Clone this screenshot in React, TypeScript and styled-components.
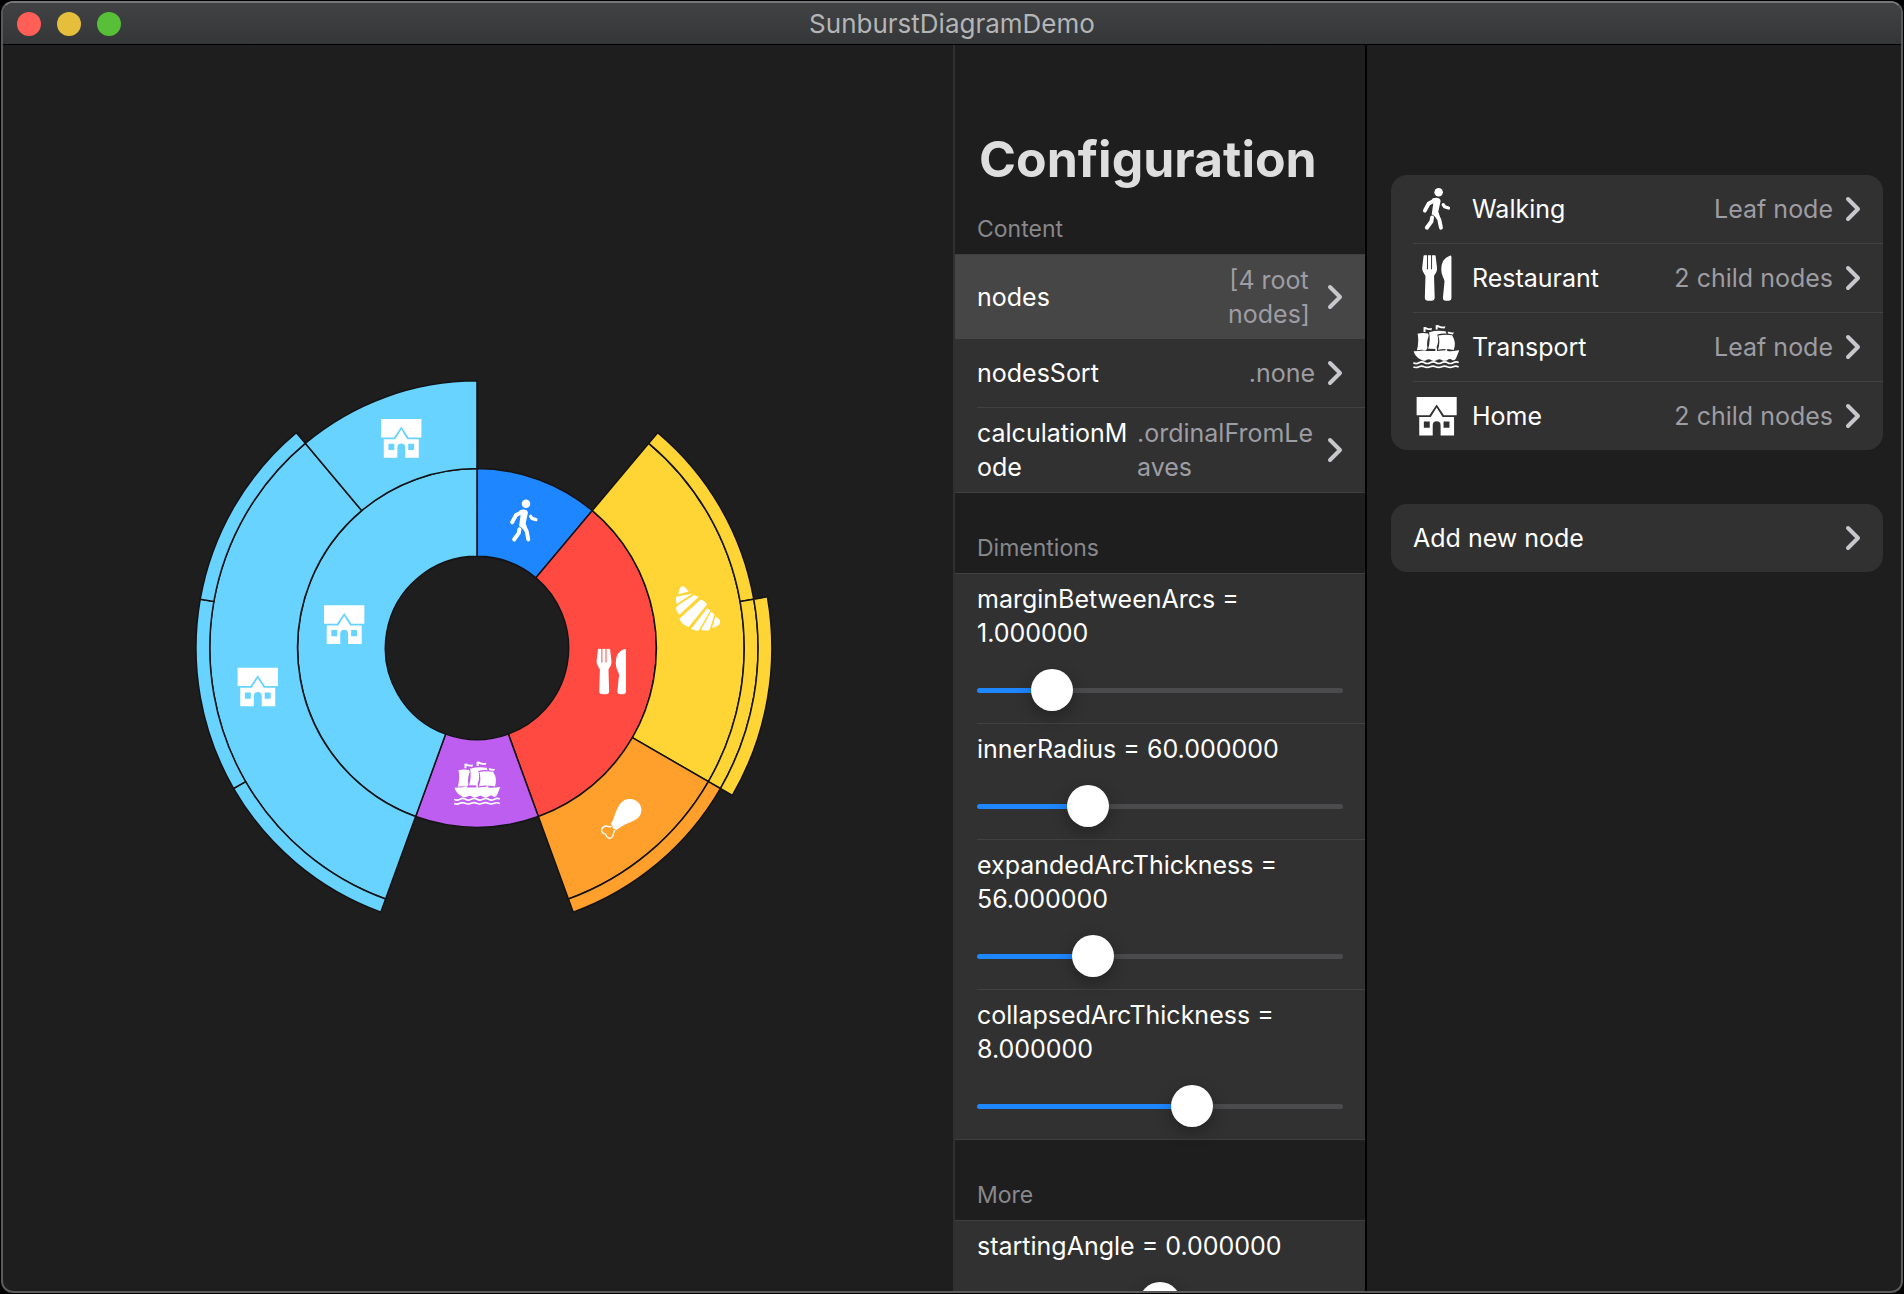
import React, { useState } from "react";
import styled, { createGlobalStyle } from "styled-components";

const GlobalStyle = createGlobalStyle`
  *, *::before, *::after { box-sizing: border-box; }
  body {
    margin: 0;
    background: #000;
    color: #fff;
    font-family: Inter, "Liberation Sans", sans-serif;
    font-size: 25px;
    line-height: 34px;
  }
  h1, h2, p { margin: 0; }
`;

const Desktop = styled.div`
  height: 100vh;
  padding: 1px;
`;

const Window = styled.div`
  display: flex;
  flex-direction: column;
  height: 100%;
  overflow: hidden;
  border: 2px solid #5a5a5c;
  border-top-color: #77777a;
  border-radius: 12px;
  background: #1e1e1e;
`;

const TitleBar = styled.header`
  display: grid;
  grid-template-columns: 1fr auto 1fr;
  align-items: center;
  flex: none;
  height: 42px;
  padding: 0 14px;
  border-bottom: 1px solid #000;
  background: linear-gradient(#414244, #343638);
`;

const TrafficLights = styled.div`
  display: flex;
  gap: 16px;
`;

const Light = styled.button<{ $color: string }>`
  width: 24px;
  height: 24px;
  padding: 0;
  border: 0;
  border-radius: 50%;
  background: ${(p) => p.$color};
`;

const WindowTitle = styled.p`
  color: #b4b5b6;
  font-size: 26px;
`;

const Panes = styled.div`
  display: grid;
  grid-template-columns: minmax(0, 1fr) 414px 534px;
  flex: 1;
  min-height: 0;
`;

const DiagramPane = styled.main`
  display: flex;
  align-items: center;
  justify-content: center;
  padding: 0 2px 41px 0;
`;

const ConfigPane = styled.section`
  overflow: hidden;
  padding-top: 80px;
  border-left: 2px solid #303032;
  border-right: 2px solid #000;
`;

const PaneTitle = styled.h1`
  padding: 0 24px;
  color: #dedede;
  font-size: 50px;
  font-weight: 700;
  line-height: 68px;
`;

const GroupTitle = styled.h2<{ $first?: boolean }>`
  padding: ${(p) => (p.$first ? "19px" : "38px")} 22px 8px;
  color: #88888c;
  font-size: 23px;
  font-weight: 400;
  line-height: 34px;
`;

const Group = styled.div`
  border-top: 1px solid #3f3f41;
  border-bottom: 1px solid #3f3f41;
  background: #313131;
`;

const Chevron = styled.svg`
  flex: none;
  width: 16px;
  height: 26px;
  fill: none;
  stroke: #c8c8cc;
  stroke-width: 4;
  stroke-linecap: round;
  stroke-linejoin: round;
`;

const LinkRow = styled.button<{ $selected?: boolean }>`
  display: flex;
  align-items: center;
  width: 100%;
  min-height: 68px;
  padding: 8px 22px;
  border: 0;
  background: ${(p) => (p.$selected ? "#464646" : "transparent")};
  color: inherit;
  font: inherit;
  text-align: left;
`;

const LinkText = styled.span`
  flex: 1;
  min-width: 0;
  word-break: break-all;
`;

const LinkValue = styled.span<{ $width?: number; $align?: string }>`
  flex: none;
  width: ${(p) => (p.$width ? `${p.$width}px` : "auto")};
  margin: 0 12px 0 8px;
  color: #9d9da3;
  text-align: ${(p) => p.$align ?? "right"};
  word-break: ${(p) => (p.$align === "left" ? "break-all" : "normal")};
`;

const Divider = styled.hr`
  height: 1px;
  margin: 0 0 0 22px;
  border: 0;
  background: #424244;
`;

const SliderRow = styled.div`
  display: flex;
  flex-direction: column;
  gap: 19px;
  padding: 8px 22px 12px;
`;

const SliderLabel = styled.label`
  display: block;
`;

const Slider = styled.input`
  appearance: none;
  display: block;
  width: 100%;
  height: 42px;
  margin: 0;
  background: transparent;

  &::-webkit-slider-runnable-track {
    height: 5px;
    border-radius: 3px;
    background: linear-gradient(
      to right,
      #1e86ff var(--fill),
      #4b4b4d var(--fill)
    );
  }

  &::-webkit-slider-thumb {
    appearance: none;
    width: 42px;
    height: 42px;
    margin-top: -19px;
    border-radius: 50%;
    background: #fff;
    box-shadow: 0 5px 16px rgba(0, 0, 0, 0.3);
  }
`;

const NodesPane = styled.aside`
  display: flex;
  flex-direction: column;
  gap: 54px;
  padding: 130px 18px 0 24px;
`;

const Card = styled.div`
  overflow: hidden;
  border-radius: 16px;
  background: #313131;
`;

const IconBox = styled.svg`
  flex: none;
  width: 46px;
  height: 46px;
  margin-right: 13px;
`;

const Diagram = styled.svg`
  width: 616px;
  height: 616px;
`;

type IconName = "walking" | "restaurant" | "ship" | "house" | "croissant" | "drumstick";

/* Glyphs are white and share a 140-unit box. */
const glyphs: Record<IconName, React.ReactNode> = {
  walking: (
    <g fill="none" stroke="#fff" strokeLinecap="round" strokeLinejoin="round" strokeWidth="12">
      <circle cx="78" cy="19" r="13" fill="#fff" stroke="none" />
      <path d="M68 43 L48 53 L36 75" />
      <path d="M92 57 L96 63 L108 67" strokeWidth="10" />
      <path d="M58 96 L56 108 L42 127" />
      <path d="M68 84 L80 102 L85 127" />
      <path
        d="M58 39 C70 33 84 36 84 46 L77 78 L83 96 L72 96 L57 86 L62 50 Z"
        fill="#fff"
        stroke="none"
      />
    </g>
  ),
  restaurant: (
    <g fill="#fff">
      <path d="M34 1h8.500v42h3V1h9.500v42h3V1H67q1.500 0 2 3l4 34q1 8-2 14-5 9-7 12l2 65q0 10-10 10H46q-10 0-10-10l2-65q-2-3-7-12-4-6-3-14l4-34q.5-3 2-3z" />
      <path d="M112 2q5-1 5 4v124q0 9-9 9h-8q-9 0-9-9l5-50q-1-6-5-13-5-12-5-23 0-33 26-42z" />
    </g>
  ),
  ship: (
    <g fill="#fff">
      <path d="M14 30 Q28 26 46 29 L48 35 Q40 58 44 72 L40 80 Q26 77 12 80 Q19 52 14 30Z" />
      <path d="M49 25 Q74 18 99 22 L102 29 Q86 28 74 32 Q80 52 72 70 L72 76 L46 75 Q54 50 49 25Z" />
      <path d="M77 35 Q98 31 119 34 Q133 57 124 79 Q100 74 76 78 Q84 55 77 35Z" />
      <path d="M32 24V10q6-2 12 2 6 2 14 0l-2 7q-10 0-18-3v8zM69 17V4q7-2 13 2 8 3 17 1l-3 7q-11 0-21-4v7zM106 23q10 4 19 3l-4 6-15-3z" />
      <path d="M2 83q15 0 34-3l5 2h27V74h5v8l26-2v-4l5 1v5q18 2 37-2l-10 24q-3 8-11 6-8-7-16 0-8 4-16 0-8-6-16 0-8 5-16 0-8-6-16 0-8 4-15-1Q6 100 2 83z" />
      <g fill="none" stroke="#fff" strokeWidth="5">
        <path d="M1 118q9 5 17 0t16-1q9 6 18 1t17-1q9 6 18 1t17-1q9 6 18 1 9-5 17-1" />
        <path d="M1 131q9 3 17-1t16 0q9 4 18 0t17 0q9 4 18 0t17 0q9 4 18 0 9-4 17 1" />
      </g>
    </g>
  ),
  house: (
    <g fill="#fff" fillRule="evenodd">
      <path d="M11 12H133V68H94L72 35L50 68H11Z" />
      <path d="M19 73H54L72 44L90 73H125V129H84V98a12 12 0 0 0-24 0V129H19ZM33 87V106H51V87ZM93 87V106H111V87Z" />
    </g>
  ),
  croissant: (
    <path
      fill="#fff"
      d="M14 25Q16 1 27 0Q34 2 45 16ZM7 32L57 22L9 54Q4 42 7 32ZM6 68Q8 62 14 57L62 27L75 33L17 87Q9 79 6 68ZM17 99L80 42Q86 38 101 55L45 124Q24 117 17 99ZM53 129L101 67L111 73L75 135Q61 135 53 129ZM82 133L113 77L123 87L108 134Q94 135 82 133ZM126 92Q142 101 141 110Q138 121 116 127Z"
    />
  ),
  drumstick: (
    <g>
      <path
        fill="#fff"
        d="M40 84C50 76 53 46 67 27C79 8 101 6 116 14C133 23 138 44 129 59C117 78 82 82 61 101L54 105L52 99L46 98L46 91Z"
      />
      <path
        fill="none"
        stroke="#fff"
        strokeWidth="4"
        d="M43 91C36 97 33 91 27 91C13 92 9 105 16 112C20 116 25 112 26 118C28 129 38 131 45 124C51 117 45 112 53 104"
      />
    </g>
  ),
};

interface ArcNode {
  color: string;
  icon?: IconName;
  ring: number;
  from: number;
  to: number;
}

const blue = "#1e86ff";
const red = "#ff4a42";
const yellow = "#ffd535";
const orange = "#ff9f2c";
const purple = "#bd5ef0";
const cyan = "#69d3ff";

const arcs: ArcNode[] = [
  { color: blue, icon: "walking", ring: 0, from: 0, to: 40 },
  { color: red, icon: "restaurant", ring: 0, from: 40, to: 160 },
  { color: purple, icon: "ship", ring: 0, from: 160, to: 200 },
  { color: cyan, icon: "house", ring: 0, from: 200, to: 360 },
  { color: yellow, icon: "croissant", ring: 1, from: 40, to: 120 },
  { color: orange, icon: "drumstick", ring: 1, from: 120, to: 160 },
  { color: cyan, icon: "house", ring: 1, from: 200, to: 320 },
  { color: cyan, icon: "house", ring: 1, from: 320, to: 360 },
  { color: yellow, ring: 2, from: 40, to: 80 },
  { color: yellow, ring: 2, from: 80, to: 120 },
  { color: orange, ring: 2, from: 120, to: 160 },
  { color: cyan, ring: 2, from: 200, to: 240 },
  { color: cyan, ring: 2, from: 240, to: 280 },
  { color: cyan, ring: 2, from: 280, to: 320 },
  { color: yellow, ring: 3, from: 80, to: 120 },
];

const polar = (radius: number, degrees: number) => {
  const a = (degrees * Math.PI) / 180;
  return [radius * Math.sin(a), -radius * Math.cos(a)];
};

const wedge = (inner: number, outer: number, from: number, to: number) => {
  const large = to - from > 180 ? 1 : 0;
  const [ax, ay] = polar(inner, from);
  const [bx, by] = polar(outer, from);
  const [cx, cy] = polar(outer, to);
  const [dx, dy] = polar(inner, to);
  return `M${ax} ${ay}L${bx} ${by}A${outer} ${outer} 0 ${large} 1 ${cx} ${cy}L${dx} ${dy}A${inner} ${inner} 0 ${large} 0 ${ax} ${ay}Z`;
};

interface Settings {
  marginBetweenArcs: number;
  innerRadius: number;
  expandedArcThickness: number;
  collapsedArcThickness: number;
  startingAngle: number;
}

function Sunburst({ settings }: { settings: Settings }) {
  const { marginBetweenArcs: gap, innerRadius, startingAngle } = settings;
  const thickness = (ring: number) =>
    ring < 2 ? settings.expandedArcThickness : settings.collapsedArcThickness;
  const innerEdge = (ring: number) => {
    let r = innerRadius - gap / 2;
    for (let i = 0; i < ring; i++) r += thickness(i) + gap;
    return r;
  };
  return (
    <Diagram viewBox="-200 -200 400 400" role="img" aria-label="Sunburst diagram">
      {arcs.map((arc, i) => {
        const inner = innerEdge(arc.ring);
        const outer = inner + thickness(arc.ring) + gap;
        return (
          <path
            key={i}
            d={wedge(inner, outer, arc.from + startingAngle, arc.to + startingAngle)}
            fill={arc.color}
            stroke="#141416"
            strokeWidth={gap}
          />
        );
      })}
      {arcs.map((arc, i) => {
        if (!arc.icon) return null;
        const middle = innerEdge(arc.ring) + (thickness(arc.ring) + gap) / 2;
        const [x, y] = polar(middle, (arc.from + arc.to) / 2 + startingAngle);
        return (
          <svg key={i} x={x - 15} y={y - 15} width="30" height="30" viewBox="0 0 140 140">
            {glyphs[arc.icon]}
          </svg>
        );
      })}
    </Diagram>
  );
}

const Disclosure = () => (
  <Chevron viewBox="0 0 16 26" aria-hidden="true">
    <path d="M3 3l10 10-10 10" />
  </Chevron>
);

interface Range {
  key: keyof Settings;
  min: number;
  max: number;
}

const dimensions: Range[] = [
  { key: "marginBetweenArcs", min: 0, max: 6 },
  { key: "innerRadius", min: 10, max: 190 },
  { key: "expandedArcThickness", min: 0, max: 192 },
  { key: "collapsedArcThickness", min: 2, max: 12 },
];
const more: Range[] = [{ key: "startingAngle", min: -180, max: 180 }];

const rootNodes: { name: string; icon: IconName; detail: string }[] = [
  { name: "Walking", icon: "walking", detail: "Leaf node" },
  { name: "Restaurant", icon: "restaurant", detail: "2 child nodes" },
  { name: "Transport", icon: "ship", detail: "Leaf node" },
  { name: "Home", icon: "house", detail: "2 child nodes" },
];

export default function App() {
  const [settings, setSettings] = useState<Settings>({
    marginBetweenArcs: 1,
    innerRadius: 60,
    expandedArcThickness: 56,
    collapsedArcThickness: 8,
    startingAngle: 0,
  });

  const renderRanges = (ranges: Range[]) =>
    ranges.map(({ key, min, max }, i) => {
      const value = settings[key];
      return (
        <React.Fragment key={key}>
          {i > 0 && <Divider />}
          <SliderRow>
            <SliderLabel htmlFor={key}>
              {key} = {value.toFixed(6)}
            </SliderLabel>
            <Slider
              id={key}
              type="range"
              min={min}
              max={max}
              step="any"
              value={value}
              onChange={(e) => setSettings({ ...settings, [key]: Number(e.target.value) })}
              style={{ "--fill": `${((value - min) / (max - min)) * 100}%` } as React.CSSProperties}
            />
          </SliderRow>
        </React.Fragment>
      );
    });

  return (
    <>
      <GlobalStyle />
      <Desktop>
        <Window>
          <TitleBar>
            <TrafficLights>
              <Light $color="#ff5f57" aria-label="Close" />
              <Light $color="#e5bf3c" aria-label="Minimize" />
              <Light $color="#57c038" aria-label="Zoom" />
            </TrafficLights>
            <WindowTitle>SunburstDiagramDemo</WindowTitle>
          </TitleBar>
          <Panes>
            <DiagramPane>
              <Sunburst settings={settings} />
            </DiagramPane>
            <ConfigPane>
              <PaneTitle>Configuration</PaneTitle>
              <GroupTitle $first>Content</GroupTitle>
              <Group>
                <LinkRow $selected>
                  <LinkText>nodes</LinkText>
                  <LinkValue $width={92} $align="center">
                    [4 root nodes]
                  </LinkValue>
                  <Disclosure />
                </LinkRow>
                <LinkRow>
                  <LinkText>nodesSort</LinkText>
                  <LinkValue>.none</LinkValue>
                  <Disclosure />
                </LinkRow>
                <Divider />
                <LinkRow>
                  <LinkText>calculationMode</LinkText>
                  <LinkValue $width={178} $align="left">
                    .ordinalFromLeaves
                  </LinkValue>
                  <Disclosure />
                </LinkRow>
              </Group>
              <GroupTitle>Dimentions</GroupTitle>
              <Group>{renderRanges(dimensions)}</Group>
              <GroupTitle>More</GroupTitle>
              <Group>{renderRanges(more)}</Group>
            </ConfigPane>
            <NodesPane>
              <Card>
                {rootNodes.map((node, i) => (
                  <React.Fragment key={node.name}>
                    {i > 0 && <Divider />}
                    <LinkRow>
                      <IconBox viewBox="0 0 140 140" aria-hidden="true">
                        {glyphs[node.icon]}
                      </IconBox>
                      <LinkText>{node.name}</LinkText>
                      <LinkValue>{node.detail}</LinkValue>
                      <Disclosure />
                    </LinkRow>
                  </React.Fragment>
                ))}
              </Card>
              <Card>
                <LinkRow>
                  <LinkText>Add new node</LinkText>
                  <Disclosure />
                </LinkRow>
              </Card>
            </NodesPane>
          </Panes>
        </Window>
      </Desktop>
    </>
  );
}
